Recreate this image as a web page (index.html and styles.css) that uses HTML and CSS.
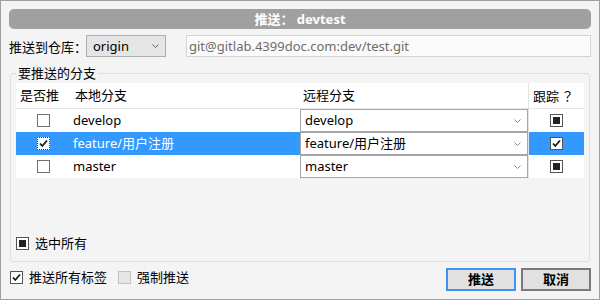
FILE: index.html
```html
<!DOCTYPE html>
<html lang="zh-CN">
<head>
  <meta charset="UTF-8">
  <meta name="viewport" content="width=device-width, initial-scale=1.0">
  <title>推送</title>
  <link rel="stylesheet" href="styles.css">
</head>
<body>
  <div class="window">
    <div class="titlebar"><span class="cjk">推送：</span> devtest</div>

    <!-- Remote selection -->
    <div class="remote-row">
      <label class="remote-label cjk">推送到仓库：</label>
      <div class="combo combo-gray">
        <span>origin</span>
        <svg class="chev" width="7" height="4" viewBox="0 0 7 4"><polyline points="0.5,0.5 3.5,3.5 6.5,0.5" fill="none" stroke="#606060" stroke-width="1"/></svg>
      </div>
      <div class="url">git@gitlab.4399doc.com:dev/test.git</div>
    </div>

    <!-- Branches -->
    <fieldset class="group">
      <legend>要推送的分支</legend>
      <div class="group-body">
        <div class="grid">
          <div class="thead">
            <div class="th c1">是否推</div>
            <div class="th c2">本地分支</div>
            <div class="th c3">远程分支</div>
            <div class="th c4">跟踪<span class="qmark" lang="zh-TW">？</span></div>
          </div>

          <div class="tr">
            <div class="td c1"><span class="cb"></span></div>
            <div class="td c2">develop</div>
            <div class="td c3">
              <div class="combo combo-cell">
                <span>develop</span>
                <svg class="chev" width="7" height="4" viewBox="0 0 7 4"><polyline points="0.5,0.5 3.5,3.5 6.5,0.5" fill="none" stroke="#8a8a8a" stroke-width="1"/></svg>
              </div>
            </div>
            <div class="td c4"><span class="cb dark mixed"></span></div>
          </div>

          <div class="tr selected">
            <div class="td c1">
              <span class="cb focus">
                <svg width="11" height="11" viewBox="0 0 11 11"><path d="M2 5.5 L4.3 8 L9 2.5" fill="none" stroke="#1a1a1a" stroke-width="1.8"/></svg>
              </span>
            </div>
            <div class="td c2">feature/用户注册</div>
            <div class="td c3">
              <div class="combo combo-cell">
                <span>feature/用户注册</span>
                <svg class="chev" width="7" height="4" viewBox="0 0 7 4"><polyline points="0.5,0.5 3.5,3.5 6.5,0.5" fill="none" stroke="#8a8a8a" stroke-width="1"/></svg>
              </div>
            </div>
            <div class="td c4">
              <span class="cb dark">
                <svg width="11" height="11" viewBox="0 0 11 11"><path d="M2 5.5 L4.3 8 L9 2.5" fill="none" stroke="#1a1a1a" stroke-width="1.8"/></svg>
              </span>
            </div>
          </div>

          <div class="tr">
            <div class="td c1"><span class="cb"></span></div>
            <div class="td c2">master</div>
            <div class="td c3">
              <div class="combo combo-cell">
                <span>master</span>
                <svg class="chev" width="7" height="4" viewBox="0 0 7 4"><polyline points="0.5,0.5 3.5,3.5 6.5,0.5" fill="none" stroke="#8a8a8a" stroke-width="1"/></svg>
              </div>
            </div>
            <div class="td c4"><span class="cb dark mixed"></span></div>
          </div>
        </div>

        <div class="check-row select-all"><span class="cb dark mixed"></span><span>选中所有</span></div>
      </div>
    </fieldset>

    <!-- Footer -->
    <div class="footer">
      <div class="check-row tags">
        <span class="cb dark">
          <svg width="11" height="11" viewBox="0 0 11 11"><path d="M2 5.5 L4.3 8 L9 2.5" fill="none" stroke="#1a1a1a" stroke-width="1.8"/></svg>
        </span>
        <span>推送所有标签</span>
      </div>
      <div class="check-row force"><span class="cb disabled"></span><span>强制推送</span></div>
      <div class="buttons">
        <button class="btn default">推送</button>
        <button class="btn">取消</button>
      </div>
    </div>
  </div>
</body>
</html>
```

FILE: styles.css
```css
/* --- Base --- */
* {box-sizing:border-box;margin:0;padding:0}
body{font-family:"Noto Sans","Noto Sans CJK SC",sans-serif;font-size:13px;line-height:17px;color:#000;background:#f4f4f4}
.cjk{font-family:"Noto Sans CJK SC",sans-serif}
.qmark{font-family:"Noto Sans CJK TC",sans-serif;margin-left:2px}
.window{width:600px;height:300px;border:1px solid #a0a0a0;padding:8px 8px 0;background:#f4f4f4;display:flex;flex-direction:column}

/* --- Title --- */
.titlebar{height:20px;line-height:20px;background:#a0a0a0;border-radius:5px;color:#fff;font-weight:700;text-align:center;white-space:nowrap}

/* --- Remote row --- */
.remote-row{display:flex;align-items:center;margin-top:6px;height:22px}
.remote-label{width:77px;flex:none;white-space:nowrap;overflow:visible}
.combo{display:flex;align-items:center;justify-content:space-between;height:22px;border:1px solid #adadad}
.combo-gray{width:80px;flex:none;background:#e5e5e5;padding:0 6px 0 6px}
.url{flex:1;margin-left:20px;height:22px;line-height:20px;border:1px solid #d4d4d4;background:#fafafa;color:#6d6d6d;padding:0 2px;white-space:nowrap}

/* --- Group box --- */
.group{margin:8px 1px 0;border:1px solid #d9dfe5;border-radius:3px;padding:2px 5px 9px}
.group legend{padding:0 2px;line-height:16px}
.group-body{height:169px;display:flex;flex-direction:column}

/* --- Branch grid --- */
.grid{background:#fff}
.thead,.tr{display:grid;grid-template-columns:54px 230px 228px 56px}
.thead{height:26px;border-bottom:1px solid #e6e6e6}
.th{line-height:25px;white-space:nowrap}
.th.c1{padding-left:4px}
.th.c2{padding-left:5px}
.th.c3{padding-left:3px}
.th.c4{padding-left:4px}
.c4{border-left:1px solid #e3e3e3}
.tr{height:23px}
.td{display:flex;align-items:center}
.td.c1,.td.c4{justify-content:center}
.td.c1{padding-left:1px}
.td.c2{padding-left:3px}
.tr.selected .c1,.tr.selected .c2,.tr.selected .c4{background:#3399ff;color:#fff}
.combo-cell{width:100%;height:23px;background:#fff;border-color:#a6a6a6;padding:0 6px 0 4px;color:#000}

/* --- Checkboxes --- */
.cb{display:inline-flex;align-items:center;justify-content:center;width:13px;height:13px;border:1px solid #707070;background:#fff;flex:none}
.cb.dark{border-color:#555}
.cb.mixed::after{content:"";width:7px;height:7px;background:#222}
.cb.focus{border:1px dotted #333}
.cb.disabled{background:#e6e6e6;border-color:#c2c2c2}
.check-row{display:flex;align-items:center;gap:6px}

.select-all{margin-top:auto}

/* --- Footer --- */
.footer{display:flex;align-items:flex-start;margin-top:6px}
.footer .check-row{margin-top:1px}
.tags{margin-left:1px}
.force{margin-left:11px}
.buttons{margin-left:auto;display:flex;gap:5px}
.btn{width:70px;height:23px;border:2px solid #7a7a7a;background:#e1e1e1;font:inherit;font-weight:700;color:#000}
.btn.default{border-color:#3d94f0}
```
